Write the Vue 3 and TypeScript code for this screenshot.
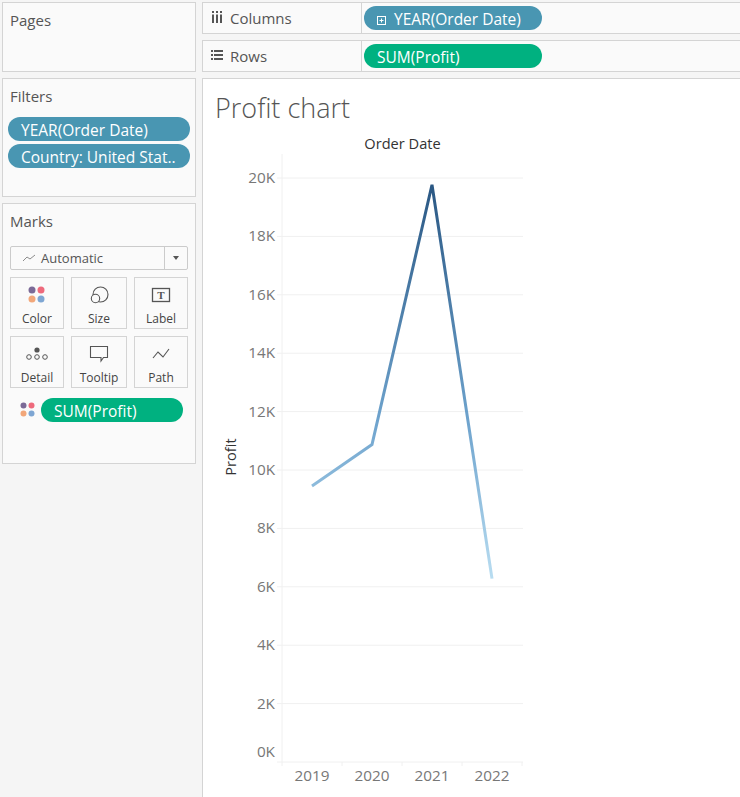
<script setup lang="ts">
import { computed } from 'vue'

interface Point {
  year: string
  profit: number
}

const data: Point[] = [
  { year: '2019', profit: 9.45 },
  { year: '2020', profit: 10.87 },
  { year: '2021', profit: 19.77 },
  { year: '2022', profit: 6.28 },
]

const ticks = [20, 18, 16, 14, 12, 10, 8, 6, 4, 2, 0]
const marks = ['Color', 'Size', 'Label', 'Detail', 'Tooltip', 'Path']

const plotLeft = 67
const plotTop = 46
const stepX = 60
const stepY = 29.2

function yPos(k: number): number {
  return plotTop + (20 - k) * stepY
}

const linePoints = computed(() => {
  return data.map((d, i) => `${plotLeft + 30 + i * stepX},${yPos(d.profit)}`).join(' ')
})
</script>

<template>
  <div class="workspace">
    <aside class="side">
      <section class="panel pages">
        <h3 class="panel-title">Pages</h3>
      </section>

      <section class="panel filters">
        <h3 class="panel-title">Filters</h3>
        <div class="pill blue">YEAR(Order Date)</div>
        <div class="pill blue">Country: United Stat..</div>
      </section>

      <section class="panel marks">
        <h3 class="panel-title">Marks</h3>
        <div class="mark-select">
          <svg class="select-icon" width="14" height="8" viewBox="0 0 14 8">
            <path d="M1 7 L5 3 L8 5 L13 1" fill="none" stroke="#8c8c8c" stroke-width="1" />
          </svg>
          <span class="select-text">Automatic</span>
          <span class="select-arrow"><i></i></span>
        </div>
        <div class="mark-grid">
          <div v-for="m in marks" :key="m" class="mark-card">
            <svg class="mark-icon" width="24" height="24" viewBox="0 0 24 24">
              <template v-if="m === 'Color'">
                <circle cx="7" cy="8" r="3.5" fill="#7b6a97" />
                <circle cx="16" cy="8" r="3.5" fill="#ee6a7c" />
                <circle cx="7" cy="17" r="3.5" fill="#f2a77a" />
                <circle cx="16" cy="17" r="3.5" fill="#7ea6d3" />
              </template>
              <template v-else-if="m === 'Size'">
                <circle cx="13.5" cy="12.5" r="7.5" fill="none" stroke="#555" stroke-width="1.1" />
                <circle cx="8.5" cy="16.5" r="4.2" fill="#fafafa" stroke="#555" stroke-width="1.1" />
              </template>
              <template v-else-if="m === 'Label'">
                <rect x="3.5" y="6.5" width="17" height="13" fill="none" stroke="#555" stroke-width="1.3" />
                <text x="12" y="17" text-anchor="middle" class="label-t">T</text>
              </template>
              <template v-else-if="m === 'Detail'">
                <circle cx="12" cy="9" r="2.6" fill="#555" />
                <circle cx="4" cy="16" r="2.3" fill="none" stroke="#555" />
                <circle cx="12" cy="16" r="2.3" fill="none" stroke="#555" />
                <circle cx="20" cy="16" r="2.3" fill="none" stroke="#555" />
              </template>
              <template v-else-if="m === 'Tooltip'">
                <path d="M3.5 5.5 H20.5 V16.5 H16.5 L14 20 V16.5 H3.5 Z" fill="none" stroke="#555" stroke-width="1.1" />
              </template>
              <template v-else>
                <path d="M4 17 L9 11 L14 16 L20 8" fill="none" stroke="#555" stroke-width="1.1" />
              </template>
            </svg>
            <span class="mark-label">{{ m }}</span>
          </div>
        </div>
        <div class="mark-pill-row">
          <svg width="16" height="16" viewBox="0 0 16 16">
            <circle cx="3.5" cy="3.5" r="3" fill="#7b6a97" />
            <circle cx="11.5" cy="3.5" r="3" fill="#ee6a7c" />
            <circle cx="3.5" cy="11.5" r="3" fill="#f2a77a" />
            <circle cx="11.5" cy="11.5" r="3" fill="#7ea6d3" />
          </svg>
          <div class="pill green mark-pill">SUM(Profit)</div>
        </div>
      </section>
    </aside>

    <main class="main">
      <div class="shelf">
        <div class="shelf-name">
          <svg width="12" height="12" viewBox="0 0 12 12" class="shelf-icon">
            <path d="M1 0h2v2H1zM5 0h2v2H5zM9 0h2v2H9zM1 3.5h2V12H1zM5 3.5h2V12H5zM9 3.5h2V12H9z" fill="#555" />
          </svg>
          <span>Columns</span>
        </div>
        <div class="shelf-body">
          <div class="pill blue shelf-pill">
            <svg width="10" height="10" viewBox="0 0 10 10" class="plus">
              <rect x="0.5" y="0.5" width="8" height="8" fill="none" stroke="#fff" />
              <path d="M4.5 2.5v4M2.5 4.5h4" stroke="#fff" />
            </svg>
            YEAR(Order Date)
          </div>
        </div>
      </div>
      <div class="shelf">
        <div class="shelf-name">
          <svg width="12" height="12" viewBox="0 0 12 12" class="shelf-icon">
            <path d="M0 1h2v2H0zM3 1h9v2H3zM0 5h2v2H0zM3 5h9v2H3zM0 9h2v2H0zM3 9h9v2H3z" fill="#555" />
          </svg>
          <span>Rows</span>
        </div>
        <div class="shelf-body">
          <div class="pill green shelf-pill">SUM(Profit)</div>
        </div>
      </div>

      <div class="chart-card">
        <h1 class="chart-title">Profit chart</h1>
        <svg class="chart" width="525" height="665" viewBox="0 0 525 665">
          <defs>
            <linearGradient id="profitLine" gradientUnits="userSpaceOnUse" x1="0" y1="52" x2="0" y2="447">
              <stop offset="0" stop-color="#2a5783" />
              <stop offset="0.6" stop-color="#6ea3cd" />
              <stop offset="1" stop-color="#b9ddf1" />
            </linearGradient>
          </defs>

          <text x="187.5" y="17" text-anchor="middle" class="axis-title">Order Date</text>

          <line v-for="t in ticks" :key="'g' + t" :x1="plotLeft - 5" :x2="plotLeft + 241" :y1="yPos(t)" :y2="yPos(t)" class="grid" />
          <line :x1="plotLeft" :x2="plotLeft" y1="22" :y2="yPos(0) + 4" class="grid" />
          <line v-for="n in 4" :key="'x' + n" :x1="plotLeft + n * stepX" :x2="plotLeft + n * stepX" :y1="yPos(0)" :y2="yPos(0) + 4" class="grid" />

          <text v-for="t in ticks" :key="'t' + t" :x="plotLeft - 7" :y="t === 0 ? yPos(0) - 5 : yPos(t) + 5" text-anchor="end" class="tick">{{ t }}K</text>
          <text v-for="(d, i) in data" :key="d.year" :x="plotLeft + 30 + i * stepX" :y="yPos(0) + 19" text-anchor="middle" class="tick">{{ d.year }}</text>

          <text transform="translate(21 325) rotate(-90)" text-anchor="middle" class="axis-title">Profit</text>

          <polyline :points="linePoints" fill="none" stroke="url(#profitLine)" stroke-width="3" stroke-linejoin="miter" />
        </svg>
      </div>
    </main>
  </div>
</template>

<style>
html, body {
  margin: 0;
  background: #f5f5f5;
}
</style>

<style scoped>
.workspace {
  display: grid;
  grid-template-columns: 194px 1fr;
  gap: 6px;
  padding: 2px 0 0 2px;
  height: 795px;
  overflow: hidden;
  font-family: "Open Sans", "Liberation Sans", sans-serif;
  color: #555;
}

.side {
  display: flex;
  flex-direction: column;
  gap: 6px;
}

.panel {
  box-sizing: border-box;
  background: #fafafa;
  border: 1px solid #d4d4d4;
  padding: 9px 5px 0;
}

.pages { height: 70px; }
.filters { height: 119px; }
.marks { height: 261px; }

.panel-title {
  margin: 0 0 0 2px;
  font-size: 15px;
  font-weight: 400;
  line-height: 16px;
  color: #555;
}

.pill {
  box-sizing: border-box;
  height: 24px;
  line-height: 24px;
  border-radius: 12px;
  font-size: 15.5px;
  color: #fff;
  padding: 1px 0 0 13px;
  white-space: nowrap;
  font-family: "Open Sans", "Liberation Sans", sans-serif;
}

.blue { background: #4996b2; }
.green { background: #00b180; }

.filters .pill {
  margin-top: 3px;
}

.filters .panel-title {
  margin-bottom: 13px;
}

.marks {
  padding-left: 7px;
  padding-right: 7px;
}

.marks .panel-title {
  margin-left: 0;
  margin-bottom: 17px;
}

.mark-select {
  display: flex;
  align-items: center;
  height: 24px;
  box-sizing: border-box;
  border: 1px solid #cbcbcb;
  border-radius: 2px;
  background: #fafafa;
  font-size: 13px;
}

.select-icon {
  margin-left: 11px;
}

.select-text {
  margin-left: 5px;
  flex: 1;
}

.select-arrow {
  width: 22px;
  height: 100%;
  border-left: 1px solid #cbcbcb;
  display: flex;
  align-items: center;
  justify-content: center;
}

.select-arrow i {
  width: 0;
  height: 0;
  border-left: 3.5px solid transparent;
  border-right: 3.5px solid transparent;
  border-top: 4px solid #555;
}

.mark-grid {
  display: grid;
  grid-template-columns: 54px 56px 54px;
  column-gap: 7px;
  row-gap: 7px;
  margin-top: 7px;
}

.mark-card {
  box-sizing: border-box;
  height: 52px;
  border: 1px solid #d4d4d4;
  display: flex;
  flex-direction: column;
  align-items: center;
  padding-top: 4px;
}

.mark-label {
  font-size: 12px;
  line-height: 16px;
  margin-top: 5px;
  color: #444;
}

.label-t {
  font-family: "Liberation Serif", serif;
  font-size: 11px;
  font-weight: 700;
  fill: #555;
}

.mark-pill-row {
  display: flex;
  align-items: center;
  gap: 5px;
  margin: 10px 0 0 10px;
}

.mark-pill {
  width: 142px;
}

.main {
  display: flex;
  flex-direction: column;
  gap: 6px;
  min-width: 0;
}

.shelf {
  box-sizing: border-box;
  display: flex;
  height: 32px;
  background: #fafafa;
  border: 1px solid #d4d4d4;
  border-right: none;
}

.shelf-name {
  box-sizing: border-box;
  width: 159px;
  display: flex;
  align-items: center;
  gap: 7px;
  padding-left: 8px;
  font-size: 15px;
  border-right: 1px solid #d4d4d4;
}

.shelf-icon {
  margin-top: -3px;
}

.shelf-body {
  padding: 3px 0 0 2px;
}

.shelf-pill {
  width: 178px;
}

.plus {
  margin-right: 3px;
  vertical-align: -1px;
}

.chart-card {
  flex: 1;
  background: #fff;
  border: 1px solid #d4d4d4;
  border-right: none;
  border-bottom: none;
  padding-left: 12px;
  min-height: 0;
  overflow: hidden;
}

.chart-title {
  margin: 13px 0 0;
  font-size: 27px;
  font-weight: 300;
  line-height: 32px;
  color: #555;
}

.chart {
  display: block;
  margin-top: 8px;
}

.grid {
  stroke: #f0f0f0;
  stroke-width: 1;
}

.tick {
  font-size: 15.3px;
  fill: #777;
  font-family: "Open Sans", "Liberation Sans", sans-serif;
}

.axis-title {
  font-size: 14.6px;
  font-weight: 500;
  fill: #333;
  font-family: "Open Sans", "Liberation Sans", sans-serif;
}
</style>
